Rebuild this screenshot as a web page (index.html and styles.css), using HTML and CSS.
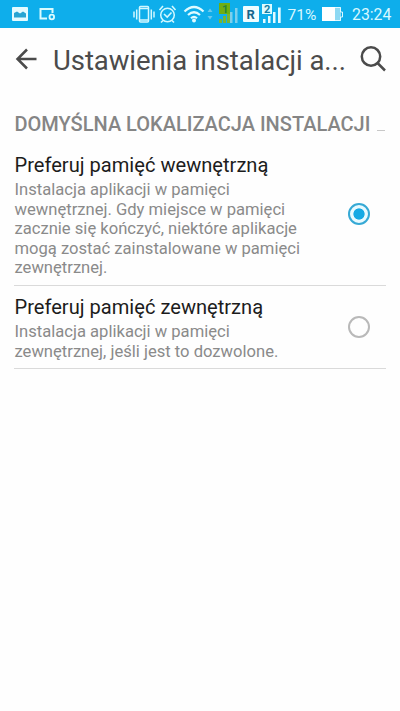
FILE: index.html
```html
<!DOCTYPE html>
<html lang="pl">
<head>
<meta charset="utf-8">
<title>Ustawienia instalacji aplikacji</title>
<link rel="stylesheet" href="styles.css">
</head>
<body>
<header class="status">
  <svg class="notifications" width="60" height="28" viewBox="0 0 60 28">
    <rect x="12" y="7" width="16" height="14" rx="1" fill="#e4fbff"/>
    <path d="M14 17.500V13l3-1.500 3 2 3-2 3 2v4z" fill="#27a5d3"/>
    <path d="M47 18.500H40.500V9H52.500V13" fill="none" stroke="#d9fbff" stroke-width="2"/>
    <circle cx="51.800" cy="17" r="2.300" fill="none" stroke="#d9fbff" stroke-width="1.800"/>
  </svg>
  <svg class="indicators" width="153" height="28" viewBox="132 0 153 28">
    <g fill="none" stroke="#d3f8ff" stroke-width="1.500">
      <rect x="139.500" y="6.500" width="9" height="15.500" rx="1"/>
      <path d="M139.500 8.500h9M139.500 20h9M136.700 9.500v10M134 11.500v6M151.300 9.500v10M154 11.500v6"/>
      <circle cx="167.500" cy="15" r="6.800" stroke-width="1.500"/>
      <path d="M164 14l3.200 3 4.300-4.500M159.500 10l3.500-4M175.500 10l-3.500-4M163 20.500l-2 2M172 20.500l2 2" stroke-width="1.600"/>
    </g>
    <g fill="none" stroke="#e0fbff" stroke-width="2.200">
      <path d="M184.500 11.500Q194 2.500 203.500 11.500M188 15Q194 9.500 200 15M191 18.200Q194 15.500 197 18.200"/>
    </g>
    <circle cx="194" cy="20.500" r="2" fill="#e0fbff"/>
    <path d="M207.500 12l2.500-3.500 2.500 3.500zM207.500 16h5l-2.500 3.500z" fill="#69c9ee"/>
    <g fill="#7dcfec"><rect x="230" y="12" width="2.500" height="11"/><rect x="235" y="8" width="2.500" height="15"/></g>
    <rect x="219" y="3" width="11" height="11" fill="#6fae12"/>
    <path d="M219 19h3v4h-3zM223 16h3v7h-3zM227 14h3v9h-3z" fill="#75b436"/>
    <text class="sim" x="222" y="12.500" fill="#278338">1</text>
    <rect x="243" y="6" width="16" height="16" rx="1" fill="#f0fdff"/>
    <text class="roaming" x="246.500" y="18.500">R</text>
    <rect x="262" y="4" width="10" height="10" fill="#ddfbff"/>
    <text class="sim" x="264" y="13" fill="#167fa6">2</text>
    <path d="M263 19h2.500v4H263zM268 16h2.500v7H268zM273 12h2.500v11H273zM278 7.500h2.700V23H278z" fill="#e4faff"/>
  </svg>
  <span class="percent">71%</span>
  <svg class="battery" width="22" height="28" viewBox="321 0 22 28">
    <rect x="322" y="7" width="19" height="14" fill="#8ed9f3"/>
    <rect x="322" y="7" width="13" height="14" fill="#fff"/>
    <path d="M335 7.500h5.500V12h2v5h-2v3.500H335" fill="none" stroke="#e0f8ff" stroke-width="1"/>
  </svg>
  <time class="clock">23:24</time>
</header>
<nav class="toolbar">
  <svg class="back" width="24" height="24" viewBox="0 0 24 24"><path d="M22.500 12H3.500M13 2.500L3.500 12L13 21.500" /></svg>
  <h1 class="title">Ustawienia instalacji a...</h1>
  <svg class="search" width="28" height="28" viewBox="0 0 28 28"><circle cx="11" cy="11.500" r="9.200"/><path d="M17.500 18l7.500 7.500"/></svg>
</nav>
<main class="content">
  <h2 class="section">DOMYŚLNA LOKALIZACJA INSTALACJI<span class="cutoff"></span></h2>
  <section class="option">
    <div class="copy">
      <h3 class="name">Preferuj pamięć wewnętrzną</h3>
      <p class="desc">Instalacja aplikacji w pamięci<br>wewnętrznej. Gdy miejsce w pamięci<br>zacznie się kończyć, niektóre aplikacje<br>mogą zostać zainstalowane w pamięci<br>zewnętrznej.</p>
    </div>
    <span class="radio checked"></span>
  </section>
  <section class="option second">
    <div class="copy">
      <h3 class="name">Preferuj pamięć zewnętrzną</h3>
      <p class="desc">Instalacja aplikacji w pamięci<br>zewnętrznej, jeśli jest to dozwolone.</p>
    </div>
    <span class="radio"></span>
  </section>
</main>
</body>
</html>
```
FILE: styles.css
```css
* { box-sizing: border-box; }
body { margin: 0; height: 711px; overflow: hidden; background: #fefefe; font-family: Roboto, sans-serif; }
h1, h2, h3, p { margin: 0; font-weight: 400; white-space: nowrap; }
svg { display: block; flex: none; }
.status { display: flex; height: 28px; background: #0eaeeb; color: #d9f8ff; font-size: 16px; line-height: 30px; }
.indicators { margin-left: 72px; }
.percent { width: 33px; margin-left: 2px; padding-left: .5px; font-size: 15.5px; }
.battery { margin-left: 1px; }
.clock { margin-left: 9px; font-size: 15.8px; }
.sim { font: 700 11px Roboto, sans-serif; }
.roaming { font: 700 13px Roboto, sans-serif; fill: #16668c; }
.toolbar { display: flex; height: 66px; align-items: center; padding: 0 0 0 14px; color: #4b4b4b; }
.back, .search { fill: none; stroke: #4b4b4b; stroke-width: 2.5; }
.back { margin-top: -4px; }
.title { width: 293px; margin: -1px 14px 0 15px; font-size: 27.5px; line-height: 36px; letter-spacing: -.06px; }
.search { margin: -4px 0 0; }
.content { padding: 0 14px; }
.section { display: flex; height: 58px; padding: 18px 0 0 .5px; color: #858585; font-size: 20px; line-height: 24px; font-weight: 500; }
.cutoff { width: 8px; height: 1px; margin: 18px 0 0 7px; background: #c8c8c8; }
.option { display: flex; justify-content: space-between; height: 134px; border-bottom: 1px solid #dadada; }
.copy { padding-left: .5px; }
.second { height: 83px; }
.second .copy { padding-top: 8px; }
.name { height: 28px; color: #1c1c1c; font-size: 20.1px; line-height: 26px; }
.desc { color: #8a8a8a; font-size: 16.6px; line-height: 19.5px; }
.radio { flex: none; width: 22px; height: 22px; margin: 52px 16px 0 0; border: 2px solid #b9b9b9; border-radius: 50%; }
.checked { margin-top: 51px; border-color: #36a9d5; background: radial-gradient(circle, #15a9e4 0 5.2px, #e8faff 6px); }
.second .radio { margin-top: 30px; }
```
